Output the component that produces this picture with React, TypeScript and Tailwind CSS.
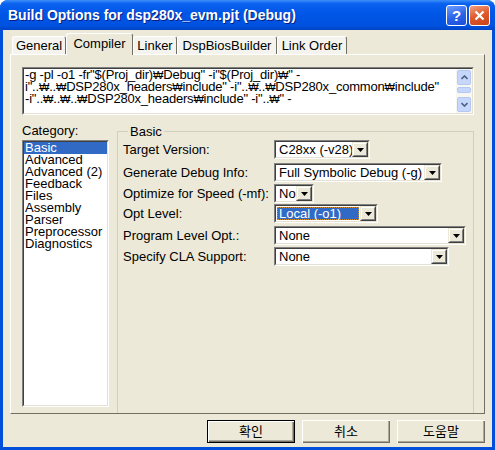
import { ReactNode } from 'react';

const ui = "font-['Liberation_Sans','Noto_Sans_CJK_KR',Arial,sans-serif]";

function Sunken({ className = '', children }: { className?: string; children: ReactNode }) {
  return (
    <div className={`border border-t-[#808080] border-l-[#808080] border-r-white border-b-white ${className}`}>
      <div className="flex h-full border border-t-[#404040] border-l-[#404040] border-r-[#e4e1d4] border-b-[#e4e1d4] bg-white">
        {children}
      </div>
    </div>
  );
}

function DropButton() {
  return (
    <div className="w-[16px] h-full shrink-0 bg-[#ece9d8] border border-t-[#ece9d8] border-l-[#ece9d8] border-r-[#404040] border-b-[#404040]">
      <div className="flex h-full items-center justify-center border border-t-white border-l-white border-r-[#808080] border-b-[#808080]">
        <svg width="7" height="4" viewBox="0 0 7 4">
          <path d="M0 0h7L3.5 4z" fill="#000" />
        </svg>
      </div>
    </div>
  );
}

function Combo({ w, value, focused = false }: { w: string; value: string; focused?: boolean }) {
  return (
    <Sunken className={`h-[19px] ${w}`}>
      <div className="flex-1 min-w-0 flex items-center px-[1px] overflow-hidden whitespace-nowrap">
        {focused ? (
          <span className="flex-1 h-[13px] flex items-center bg-[#316ac5] text-white border border-dotted border-[#d08a30] leading-none pl-[1px]">
            {value}
          </span>
        ) : (
          <span className="pl-[2px] leading-none">{value}</span>
        )}
      </div>
      <DropButton />
    </Sunken>
  );
}

function Tab({ label, w, active = false }: { label: string; w: string; active?: boolean }) {
  return (
    <div
      className={`${w} flex items-center justify-center whitespace-nowrap rounded-t-[3px] border-t border-l border-r border-t-white border-l-white border-r-[#716f64] ${
        active ? 'h-[22px] bg-[#ece9d8] relative z-10 pb-[2px]' : 'h-[19px] bg-[#f4f3ee] border-b border-b-white'
      }`}
    >
      {label}
    </div>
  );
}

function Chevron({ up }: { up: boolean }) {
  return (
    <svg width="7" height="5" viewBox="0 0 7 5">
      <path d={up ? 'M0.5 4L3.5 1L6.5 4' : 'M0.5 1L3.5 4L6.5 1'} fill="none" stroke="#4d6185" strokeWidth="1.6" />
    </svg>
  );
}

// the Korean system font draws the backslash as a narrow won sign
function OptionLine({ text }: { text: string }) {
  const parts = text.split('₩');
  return (
    <div className="h-[12px]">
      {parts.map((p, i) => (
        <span key={i}>
          {p}
          {i < parts.length - 1 && <span className="text-[11px]">₩</span>}
        </span>
      ))}
    </div>
  );
}

const rows = [
  { label: 'Target Version:', value: 'C28xx (-v28)', w: 'w-[96px]', h: 'h-[23px]' },
  { label: 'Generate Debug Info:', value: 'Full Symbolic Debug (-g)', w: 'w-[168px]', h: 'h-[21px]' },
  { label: 'Optimize for Speed (-mf):', value: 'No', w: 'w-[40px]', h: 'h-[20px]' },
  { label: 'Opt Level:', value: 'Local (-o1)', w: 'w-[104px]', h: 'h-[22px]', focused: true },
  { label: 'Program Level Opt.:', value: 'None', w: 'w-[192px]', h: 'h-[21px]' },
  { label: 'Specify CLA Support:', value: 'None', w: 'w-[175px]', h: 'h-[21px]' },
];

const categories = ['Basic', 'Advanced', 'Advanced (2)', 'Feedback', 'Files', 'Assembly', 'Parser', 'Preprocessor', 'Diagnostics'];

const optionLines = [
  '-g -pl -o1 -fr"$(Proj_dir)₩Debug" -i"$(Proj_dir)₩" -',
  'i"..₩..₩DSP280x_headers₩include" -i"..₩..₩DSP280x_common₩include"',
  '-i"..₩..₩..₩DSP280x_headers₩include" -i"..₩" -',
];

const btn =
  'w-[88px] h-[23px] flex items-center justify-center shadow-[inset_1px_1px_0_#fff,inset_-1px_-1px_0_#716f64,inset_-2px_-2px_0_#aca899]';

export default function App() {
  return (
    <div className={`w-[495px] h-[450px] flex flex-col bg-[#0050dc] rounded-t-[8px] overflow-hidden text-[13px] text-black ${ui}`}>
      <div className="h-[30px] flex items-center pl-[8px] pr-[5px] bg-[linear-gradient(180deg,#3d8ff9_0%,#0a62ef_12%,#0056e7_45%,#0052e0_85%,#0043c4_100%)]">
        <span className="text-white font-bold text-[14px] [text-shadow:1px_1px_0_#0a1e80]">
          Build Options for dsp280x_evm.pjt (Debug)
        </span>
        <div className="ml-auto flex gap-[2px]">
          <div className="w-[21px] h-[21px] rounded-[3px] border border-white bg-[linear-gradient(160deg,#6e9cff_0%,#2a63e8_55%,#1a4fd4_100%)] flex items-center justify-center text-white font-bold text-[15px] leading-none">
            ?
          </div>
          <div className="w-[21px] h-[21px] rounded-[3px] border border-white bg-[linear-gradient(160deg,#f0a080_0%,#e0582a_50%,#c8441c_100%)] flex items-center justify-center">
            <svg width="11" height="11" viewBox="0 0 11 11">
              <path d="M1.5 1.5L9.5 9.5M9.5 1.5L1.5 9.5" stroke="#fff" strokeWidth="2.2" />
            </svg>
          </div>
        </div>
      </div>

      <div className="mx-[3px] mb-[3px] flex-1 bg-[#ece9d8] flex flex-col px-[7px] pt-[3px] pb-[4px]">
        <div className="ml-[2px] h-[22px] flex items-end">
          <Tab label="General" w="w-[54px]" />
          <Tab label="Compiler" w="w-[67px]" active />
          <Tab label="Linker" w="w-[44px]" />
          <Tab label="DspBiosBuilder" w="w-[100px]" />
          <Tab label="Link Order" w="w-[70px]" />
        </div>

        <div className="-mt-px h-[360px] flex flex-col border border-t-white border-l-white border-r-[#716f64] border-b-[#716f64] pl-[11px] pr-[9px] pt-[12px]">
          <Sunken className="h-[48px] w-[452px]">
            <div className="flex-1 min-w-0 pl-[1px] whitespace-pre leading-[12px] tracking-[-0.2px]">
              {optionLines.map((l) => (
                <OptionLine key={l} text={l} />
              ))}
            </div>
            <div className="w-[16px] shrink-0 flex flex-col bg-[#f7f6f1] pt-[1px]">
              <div className="h-[15px] mx-[1px] rounded-[2px] bg-[#c7d6fb] border border-[#b4c8f6] flex items-center justify-center">
                <Chevron up />
              </div>
              <div className="mt-[2px] h-[6px] mx-[1px] rounded-[2px] bg-[#c7d6fb] border border-[#b4c8f6]" />
              <div className="flex-1" />
              <div className="h-[15px] mx-[1px] mb-[1px] rounded-[2px] bg-[#c7d6fb] border border-[#b4c8f6] flex items-center justify-center">
                <Chevron up={false} />
              </div>
            </div>
          </Sunken>

          <div className="mt-[9px] flex flex-1 items-stretch">
            <div className="w-[87px] flex flex-col">
              <div className="h-[16px] leading-[13px]">Category:</div>
              <Sunken className="h-[267px]">
                <div className="flex-1 flex flex-col leading-[12px]">
                  {categories.map((c, i) => (
                    <div key={c} className={`h-[12px] pl-[1px] whitespace-nowrap ${i === 0 ? 'bg-[#316ac5] text-white' : ''}`}>
                      {c}
                    </div>
                  ))}
                </div>
              </Sunken>
            </div>

            <fieldset className="ml-[8px] w-[357px] border border-b-0 border-[#d0d0bf] pl-[5px]">
              <legend className="ml-[5px] px-[2px] leading-[15px]">Basic</legend>
              <div className="pt-[1px] flex flex-col">
                {rows.map((r) => (
                  <div key={r.label} className={`${r.h} flex items-start`}>
                    <div className="w-[151px] h-[19px] flex items-center whitespace-nowrap">{r.label}</div>
                    <Combo w={r.w} value={r.value} focused={r.focused} />
                  </div>
                ))}
              </div>
            </fieldset>
          </div>
        </div>

        <div className="mt-[6px] flex justify-end gap-[7px]">
          <div className={`${btn} border border-black`}>확인</div>
          <div className={btn}>취소</div>
          <div className={btn}>도움말</div>
        </div>
      </div>
    </div>
  );
}
